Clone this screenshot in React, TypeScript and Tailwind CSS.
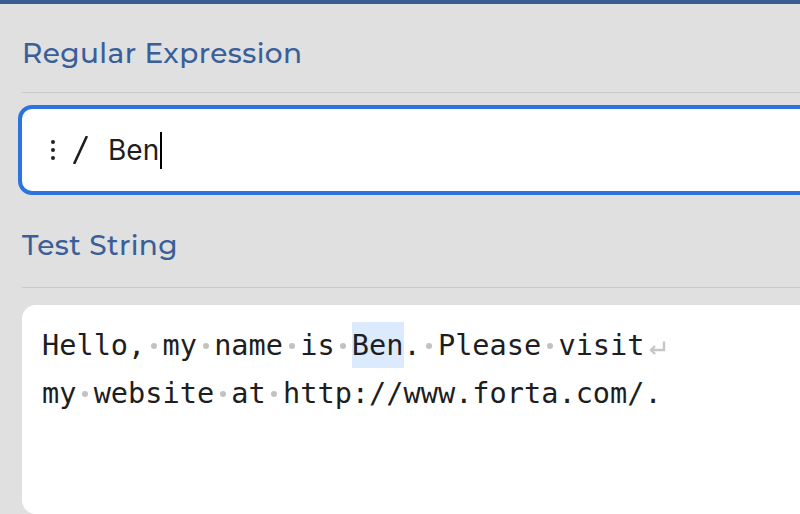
const testLines: { text: string; match?: [number, number]; eol?: boolean }[] = [
  { text: "Hello, my name is Ben. Please visit", match: [18, 21], eol: true },
  { text: "my website at http://www.forta.com/." },
];

// spaces are shown as faint dots, like an editor's whitespace view
function Whitespace({ text }: { text: string }) {
  return (
    <>
      {text.split(/( )/).map((part, i) =>
        part === " " ? (
          <span key={i} className="inline-flex w-[1ch] justify-center align-[0.2em]">
            <span className="h-[6px] w-[6px] rounded-full bg-[#c2c2c2]" />
          </span>
        ) : (
          <span key={i}>{part}</span>
        ),
      )}
    </>
  );
}

function SectionTitle({ children, top }: { children: string; top: string }) {
  return (
    <div className={`${top} border-b border-[#c9c9c9]`}>
      <h2 className="font-['Montserrat','Open_Sans',sans-serif] text-[28px] font-medium leading-[28px] tracking-[0.4px] text-[#3a5f98]">
        {children}
      </h2>
    </div>
  );
}

export default function App() {
  return (
    <div className="flex h-[514px] w-[800px] flex-col overflow-hidden bg-[#e0e0e0]">
      <div className="h-[4px] bg-[#3a5d94]" />
      <div className="flex flex-1 flex-col pl-[22px]">
        <SectionTitle top="pt-[35px] pb-[25px]">Regular Expression</SectionTitle>

        <div className="-ml-[4px] -mr-6 mt-[12px] flex h-[90px] items-center rounded-[14px] border-[4px] border-[#2b74df] bg-white pl-[29px]">
          <div className="flex flex-col gap-[4px]">
            <span className="h-[4px] w-[4px] rounded-full bg-[#222]" />
            <span className="h-[4px] w-[4px] rounded-full bg-[#222]" />
            <span className="h-[4px] w-[4px] rounded-full bg-[#222]" />
          </div>
          <svg className="ml-[18px] h-[28px] w-[15px]" viewBox="0 0 15 28">
            <path d="M13.5 1 L1.5 27" stroke="#1e1e1e" strokeWidth="2.6" strokeLinecap="round" />
          </svg>
          <span className="ml-[20px] font-['Inter',sans-serif] text-[28px] text-[#1e1e1e]">Ben</span>
          <span className="ml-[1px] h-[37px] w-[2px] bg-black" />
        </div>

        <SectionTitle top="pt-[36px] pb-[28px]">Test String</SectionTitle>

        <div className="-mr-6 mt-[17px] flex-1 rounded-[14px] bg-white pl-[20px] pt-[16px] font-['DejaVu_Sans_Mono',monospace] text-[28.6px] leading-[48px] text-[#1e1e1e]">
          {testLines.map((line, i) => (
            <div key={i} className="whitespace-pre">
              {line.match ? (
                <>
                  <Whitespace text={line.text.slice(0, line.match[0])} />
                  <span className="bg-[#dbeafd] py-[6px]">
                    {line.text.slice(line.match[0], line.match[1])}
                  </span>
                  <Whitespace text={line.text.slice(line.match[1])} />
                </>
              ) : (
                <Whitespace text={line.text} />
              )}
              {line.eol && (
                <svg className="ml-[2px] inline-block h-[16px] w-[20px] align-[-0.05em]" viewBox="0 0 20 16">
                  <path d="M17 1.5 V10 H4" fill="none" stroke="#c6c6c6" strokeWidth="2.4" />
                  <path d="M8 6 L4 10 L8 14" fill="none" stroke="#c6c6c6" strokeWidth="2.4" />
                </svg>
              )}
            </div>
          ))}
        </div>
      </div>
    </div>
  );
}
